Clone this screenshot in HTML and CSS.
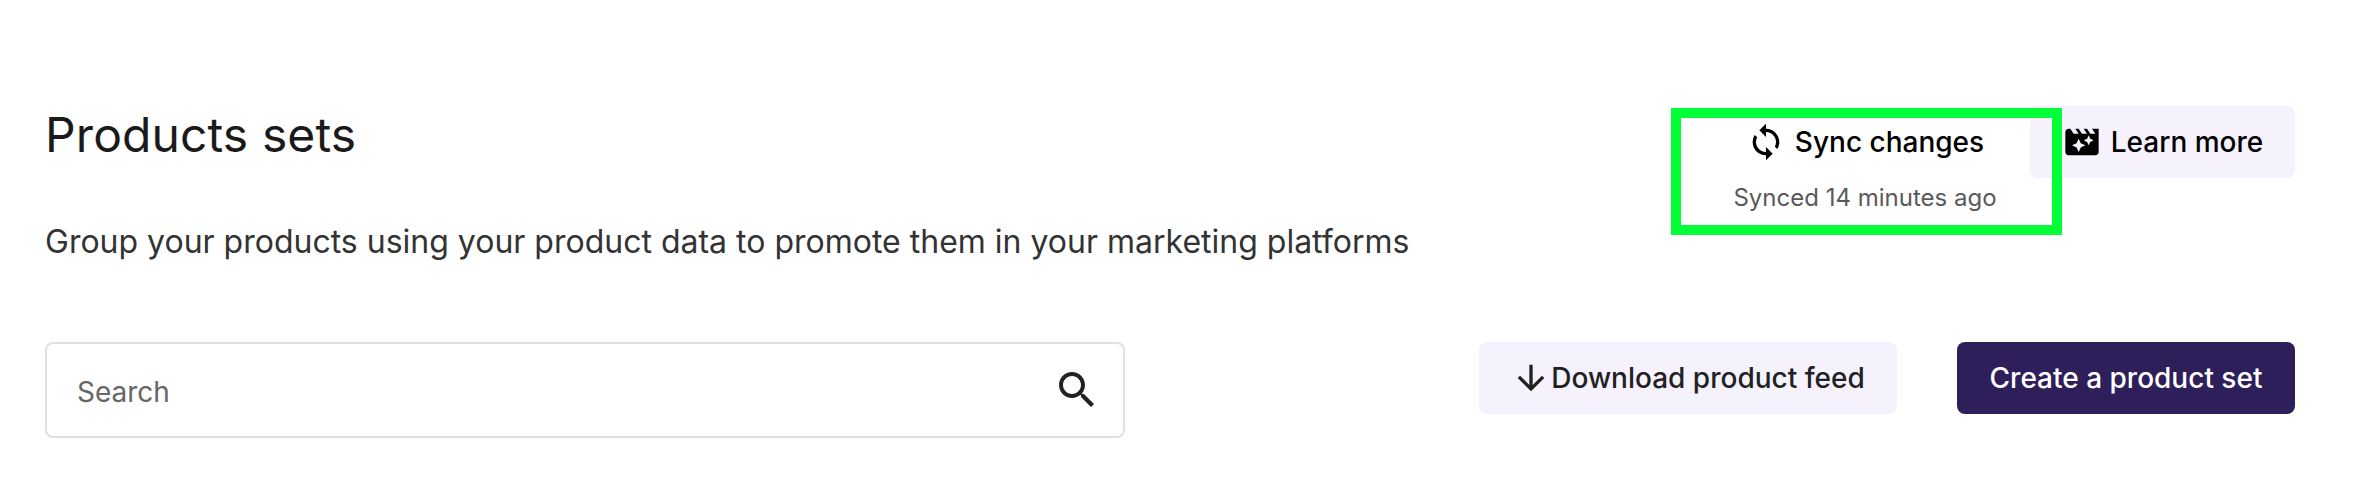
FILE: index.html
```html
<!DOCTYPE html>
<html lang="en">
<head>
  <meta charset="UTF-8">
  <meta name="viewport" content="width=device-width, initial-scale=1.0">
  <title>Products sets</title>
  <link rel="stylesheet" href="styles.css">
</head>
<body>
  <header class="page-header">
    <div class="intro">
      <h1>Products sets</h1>
      <p class="description">Group your products using your product data to promote them in your marketing platforms</p>
    </div>
    <div class="header-actions">
      <div class="sync">
        <button class="btn btn-text">
          <svg class="icon" viewBox="0 0 24 24"><path d="M12 4V1L8 5l4 4V6c3.31 0 6 2.69 6 6 0 1.01-.25 1.97-.7 2.8l1.46 1.46C19.54 15.03 20 13.57 20 12c0-4.42-3.58-8-8-8zm0 14c-3.31 0-6-2.69-6-6 0-1.01.25-1.97.7-2.8L5.24 7.74C4.46 8.97 4 10.43 4 12c0 4.42 3.58 8 8 8v3l4-4-4-4v3z"/></svg>
          <span>Sync changes</span>
        </button>
        <span class="sync-status">Synced 14 minutes ago</span>
        <div class="highlight"></div>
      </div>
      <button class="btn btn-light btn-learn">
        <svg class="icon" viewBox="0 0 24 24"><path d="M18 4l2 3h-3l-2-3h-2l2 3h-3l-2-3H8l2 3H7L5 4H4c-1.1 0-1.99.9-1.99 2L2 18c0 1.1.9 2 2 2h16c1.1 0 2-.9 2-2V4h-4zm-6.75 11.25L10 18l-1.25-2.75L6 14l2.75-1.25L10 10l1.25 2.75L14 14l-2.75 1.25zm5.69-3.31L16 14l-.94-2.06L13 11l2.06-.94L16 8l.94 2.06L19 11l-2.06.94z"/></svg>
        <span>Learn more</span>
      </button>
    </div>
  </header>

  <div class="toolbar">
    <label class="search">
      <input type="text" placeholder="Search">
      <svg class="icon-search" viewBox="0 0 24 24"><path d="M15.5 14h-.79l-.28-.27C15.41 12.59 16 11.11 16 9.5 16 5.91 13.09 3 9.5 3S3 5.91 3 9.5 5.91 16 9.5 16c1.61 0 3.09-.59 4.23-1.57l.27.28v.79l5 4.99L20.49 19l-4.99-5zm-6 0C7.01 14 5 11.99 5 9.5S7.01 5 9.5 5 14 7.01 14 9.5 11.99 14 9.5 14z"/></svg>
    </label>
    <div class="toolbar-actions">
      <button class="btn btn-light btn-download">
        <svg class="icon" viewBox="0 0 24 24"><path d="M20 12l-1.41-1.41L13 16.17V4h-2v12.17l-5.58-5.59L4 12l8 8 8-8z"/></svg>
        <span>Download product feed</span>
      </button>
      <button class="btn btn-primary">Create a product set</button>
    </div>
  </div>
</body>
</html>
```

FILE: styles.css
```css
* {
  box-sizing: border-box;
}
body {
  margin: 0;
  padding: 106px 63px 0 45px;
  background: #fff;
  color: #212121;
  font-family: Inter, sans-serif;
}
.page-header {
  display: flex;
  justify-content: space-between;
  height: 236px;
}
h1 {
  margin: 0;
  font-size: 48px;
  font-weight: 400;
  line-height: 58px;
  letter-spacing: 0.1px;
  color: #1a1a1a;
}
.description {
  margin: 56px 0 0;
  font-size: 32px;
  line-height: 44px;
  color: #333;
}
.header-actions {
  display: flex;
  align-items: flex-start;
}
.sync {
  position: relative;
  display: flex;
  flex-direction: column;
  align-items: center;
  width: 330px;
}
.sync-status {
  margin-top: 5px;
  font-size: 24px;
  line-height: 30px;
  color: #595959;
}
/* green frame over the sync block */
.highlight {
  position: absolute;
  top: 2px;
  left: -29px;
  width: 391px;
  height: 127px;
  border: 10px solid #00ff37;
}
.btn {
  display: flex;
  align-items: center;
  justify-content: center;
  height: 72px;
  padding: 0 32px;
  border: none;
  border-radius: 8px;
  font-family: inherit;
  font-size: 28px;
  font-weight: 500;
  white-space: nowrap;
  cursor: pointer;
}
.btn-text {
  gap: 9px;
  background: none;
  color: #000;
}
.btn-light {
  background: #f5f2fe;
  color: #212121;
}
.btn-learn {
  gap: 9px;
  width: 265px;
  color: #000;
}
.btn-download {
  width: 418px;
}
.btn-primary {
  width: 338px;
  background: #2e1f5b;
  color: #fff;
}
.icon {
  flex: none;
  width: 40px;
  height: 40px;
  fill: currentColor;
}
.toolbar {
  display: flex;
  justify-content: space-between;
  align-items: flex-start;
}
.search {
  display: flex;
  align-items: center;
  width: 1080px;
  height: 96px;
  padding: 0 22px 0 30px;
  border: 2px solid #e0e0e0;
  border-radius: 8px;
}
.search input {
  flex: 1;
  padding: 4px 0 0;
  border: none;
  outline: none;
  background: none;
  font-family: inherit;
  font-size: 28px;
}
.search input::placeholder {
  color: #666;
}
.icon-search {
  width: 48px;
  height: 48px;
  fill: #212121;
}
.toolbar-actions {
  display: flex;
  gap: 60px;
}
```
